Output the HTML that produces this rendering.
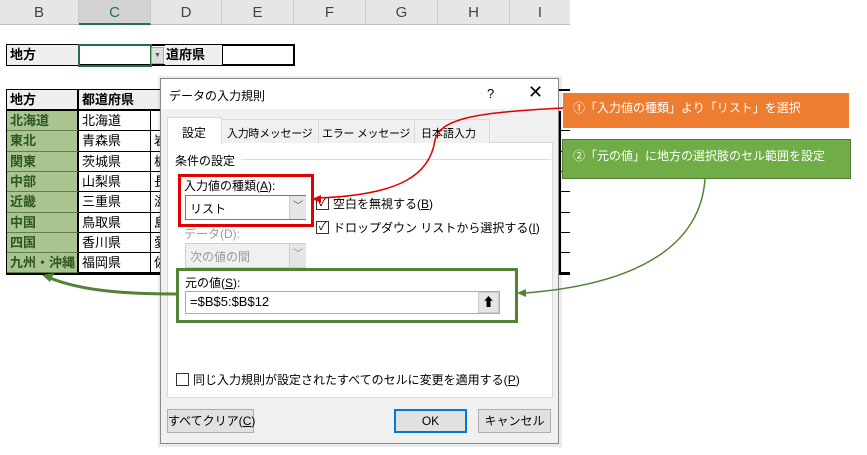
<!DOCTYPE html>
<html><head><meta charset="utf-8"><style>
*{box-sizing:border-box;margin:0;padding:0}
body{width:867px;height:455px;background:#fff;position:relative;overflow:hidden;font-family:"Liberation Sans","Noto Sans CJK JP",sans-serif;font-size:12px;color:#000}
.a{position:absolute;white-space:nowrap}
.hd{position:absolute;top:0;height:25px;background:#e6e6e6;border-right:1px solid #c8c8c8;border-bottom:1px solid #bcbcbc;text-align:center;line-height:25px;font-size:15px;color:#444}
.c{position:absolute;border:1px solid #000;font-size:13px;line-height:19px;padding-left:3px;overflow:hidden;white-space:nowrap}
.g{background:#a9c48f;color:#2e5524;font-weight:bold}
.btn{position:absolute;background:#e1e1e1;border:1px solid #adadad;text-align:center;line-height:22px;font-size:12px;white-space:nowrap}
.cb{position:absolute;width:13px;height:13px;border:1px solid #333;background:#fff}
</style></head><body>
<div class="hd" style="left:0;width:79px">B</div>
<div class="hd" style="left:79px;width:72px;background:#d2d2d2;border-bottom:2px solid #217346;color:#217346">C</div>
<div class="hd" style="left:151px;width:71px">D</div>
<div class="hd" style="left:222px;width:72px">E</div>
<div class="hd" style="left:294px;width:72px">F</div>
<div class="hd" style="left:366px;width:72px">G</div>
<div class="hd" style="left:438px;width:72px">H</div>
<div class="hd" style="left:510px;width:60px;border-right:none">I</div>

<div class="a" style="left:6px;top:44px;width:289px;height:22px;border:2px solid #000"></div>
<div class="c" style="left:7px;top:45px;width:72px;height:20px;background:#efefef;font-weight:bold;border:none;border-right:1px solid #000">地方</div>
<div class="a" style="left:78px;top:44px;width:74px;height:23px;border:2px solid #217346"></div>
<div class="a" style="left:151px;top:47px;width:13px;height:17px;background:#ddd;border:1px solid #aaa;font-size:7px;text-align:center;line-height:15px;color:#555">▼</div>
<div class="c" style="left:165px;top:45px;width:57px;height:20px;background:#efefef;font-weight:bold;border:none;padding-left:1px">道府県</div>
<div class="a" style="left:222px;top:45px;width:1px;height:20px;background:#000"></div>

<div class="a" style="left:6px;top:89px;width:564px;height:186px;border:2px solid #000;border-right:none"></div>
<div class="c" style="left:7px;top:90px;width:72px;height:21px;background:#efefef;font-weight:bold;border-width:0 2px 2px 0">地方</div>
<div class="c" style="left:79px;top:90px;width:100px;height:21px;background:#efefef;font-weight:bold;border-width:0 0 2px 0">都道府県</div>
<div id="rows"></div>

<div class="a" style="left:158px;top:76px;width:404px;height:371px;background:rgba(0,0,0,0.08)"></div>
<div class="a" style="left:160px;top:78px;width:399px;height:366px;background:#f0f0f0;border:1px solid #888">
  <div class="a" style="left:0;top:0;width:397px;height:30px;background:#fff"></div>
  <div class="a" style="left:8px;top:8px;font-size:12px">データの入力規則</div>
  <div class="a" style="left:326px;top:7px;font-size:13px">?</div>
  <div class="a" style="left:367px;top:3px;font-size:18px;font-weight:300">✕</div>
  <div class="a" style="left:6px;top:63px;width:386px;height:256px;background:#fff;border:1px solid #d9d9d9"></div>
  <div class="a" style="left:60px;top:40px;width:269px;height:24px;background:#f0f0f0;border:1px solid #d9d9d9;border-bottom:none"></div>
  <div class="a" style="left:157px;top:40px;width:1px;height:24px;background:#d9d9d9"></div>
  <div class="a" style="left:253px;top:40px;width:1px;height:24px;background:#d9d9d9"></div>
  <div class="a" style="left:66px;top:46px;font-size:11px;letter-spacing:-0.3px">入力時メッセージ</div>
  <div class="a" style="left:161px;top:46px;font-size:11px;letter-spacing:-0.3px">エラー メッセージ</div>
  <div class="a" style="left:260px;top:46px;font-size:11px">日本語入力</div>
  <div class="a" style="left:6px;top:38px;width:55px;height:27px;background:#fff;border:1px solid #d9d9d9;border-bottom:none"></div>
  <div class="a" style="left:21px;top:45px">設定</div>
  <div class="a" style="left:14px;top:73px">条件の設定</div>
  <div class="a" style="left:80px;top:80px;width:310px;height:1px;background:#dcdcdc"></div>
  <div class="a" style="left:23px;top:98px">入力値の種類(<u>A</u>):</div>
  <div class="a" style="left:24px;top:116px;width:121px;height:25px;background:#fff;border:1px solid #7a7a7a"><div class="a" style="left:4px;top:4px">リスト</div><div class="a" style="left:103px;top:0;width:17px;height:23px;background:#e5e5e5;border-left:1px solid #ccc;text-align:center;font-size:10px;line-height:22px;color:#555">﹀</div></div>
  <div class="a" style="left:17px;top:95px;width:136px;height:53px;border:3px solid #e00000"></div>
  <div class="a" style="left:23px;top:146px;color:#999">データ(D):</div>
  <div class="a" style="left:24px;top:164px;width:121px;height:25px;background:#f0f0f0;border:1px solid #ccc"><div class="a" style="left:4px;top:4px;color:#999">次の値の間</div><div class="a" style="left:103px;top:0;width:17px;height:23px;background:#e5e5e5;border-left:1px solid #ccc;text-align:center;font-size:10px;line-height:22px;color:#888">﹀</div></div>
  <div class="cb" style="left:155px;top:118px;font-size:11px;line-height:11px;text-align:center">✓</div>
  <div class="a" style="left:172px;top:116px">空白を無視する(<u>B</u>)</div>
  <div class="cb" style="left:155px;top:142px;font-size:11px;line-height:11px;text-align:center">✓</div>
  <div class="a" style="left:172px;top:140px">ドロップダウン リストから選択する(<u>I</u>)</div>
  <div class="a" style="left:15px;top:189px;width:342px;height:55px;border:3px solid #548235"></div>
  <div class="a" style="left:24px;top:195px">元の値(<u>S</u>):</div>
  <div class="a" style="left:24px;top:212px;width:315px;height:23px;background:#fff;border:1px solid #aaa"><div class="a" style="left:4px;top:2px;font-size:13px">=$B$5:$B$12</div><div class="a" style="left:292px;top:0;width:21px;height:21px;background:#e5e5e5;border:1px solid #ccc;text-align:center;font-weight:bold;font-size:12px;line-height:19px">⬆</div></div>
  <div class="cb" style="left:15px;top:294px"></div>
  <div class="a" style="left:32px;top:292px">同じ入力規則が設定されたすべてのセルに変更を適用する(<u>P</u>)</div>
  <div class="btn" style="left:6px;top:330px;width:87px;height:24px">すべてクリア(<u>C</u>)</div>
  <div class="btn" style="left:233px;top:330px;width:73px;height:24px;border:2px solid #0078d7;line-height:20px">OK</div>
  <div class="btn" style="left:317px;top:330px;width:73px;height:24px">キャンセル</div>
</div>

<div class="a" style="left:563px;top:93px;width:286px;height:35px;background:#ed7d31;color:#fff;font-size:12px;padding:6px 0 0 10px">①「入力値の種類」より「リスト」を選択</div>
<div class="a" style="left:562px;top:139px;width:289px;height:40px;background:#70ad47;border:1px solid #507e32;color:#fff;font-size:12px;padding:7px 0 0 10px">②「元の値」に地方の選択肢のセル範囲を設定</div>

<svg class="a" style="left:0;top:0" width="867" height="455">
<path d="M563 108 C480 112 440 118 435 140 C430 175 400 195 318 198" fill="none" stroke="#e00000" stroke-width="1.5"/>
<path d="M312 199 l9 -4 l0 8 z" fill="#e00000"/>
<path d="M705 179 C700 250 630 285 524 293" fill="none" stroke="#548235" stroke-width="1.5"/>
<path d="M517 293 l9 -4 l0 8 z" fill="#548235"/>
<path d="M176 294 C120 294 80 290 50 278" fill="none" stroke="#548235" stroke-width="3"/>
<path d="M42 275 l12 -2 l-4 9 z" fill="#548235"/>
</svg>
<script>
var r=["北海道","東北","関東","中部","近畿","中国","四国","九州・沖縄"],p=["北海道","青森県","茨城県","山梨県","三重県","鳥取県","香川県","福岡県"],p2=["","岩","栃","長","滋","島","愛","佐"],h="";
for(var i=0;i<8;i++){var t=Math.round(111+i*20.3),hh=Math.round(111+(i+1)*20.3)-t;
h+='<div class="c g" style="left:7px;top:'+t+'px;width:72px;height:'+hh+'px;border-width:0 2px 1px 0;border-color:#5e7f48 #000 #5e7f48 #000">'+r[i]+'</div>';
h+='<div class="c" style="left:79px;top:'+t+'px;width:72px;height:'+hh+'px;border-width:0 1px 1px 0">'+p[i]+'</div>';
h+='<div class="c" style="left:151px;top:'+t+'px;width:72px;height:'+hh+'px;border-width:0 1px 1px 0">'+p2[i]+'</div>';
h+='<div class="c" style="left:559px;top:'+t+'px;width:11px;height:'+hh+'px;border-width:0 0 1px 2px"></div>';}
document.getElementById("rows").outerHTML=h;
</script>
</body></html>
